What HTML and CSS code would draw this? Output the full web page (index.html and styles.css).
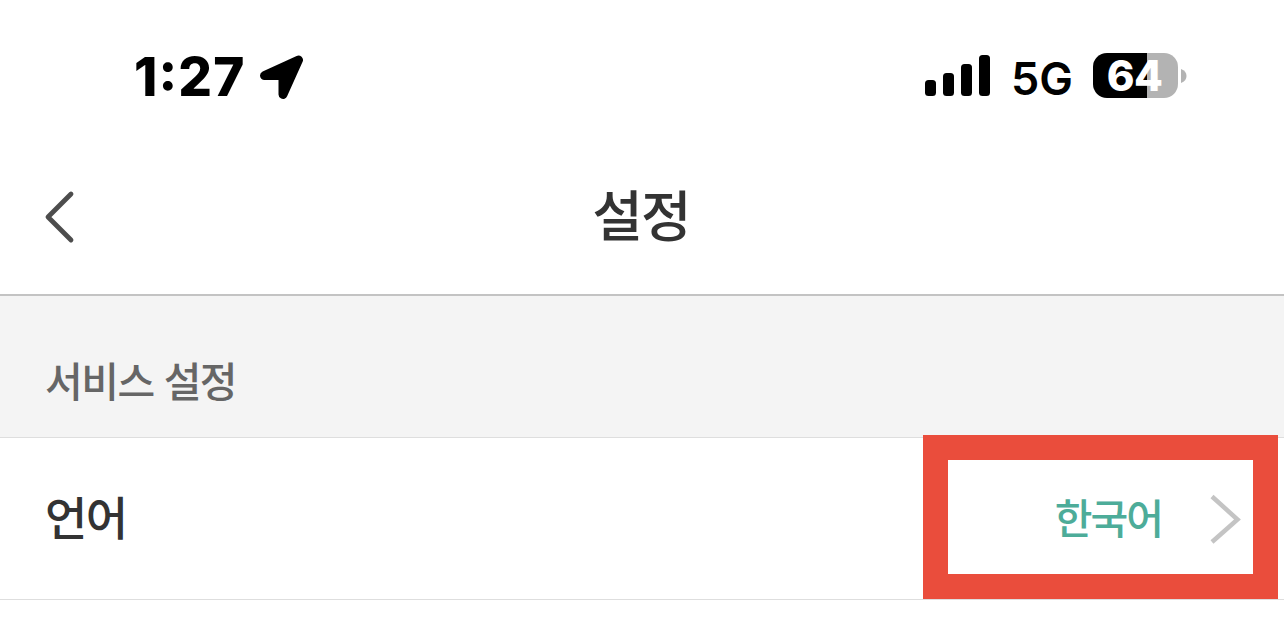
FILE: index.html
```html
<!DOCTYPE html>
<html lang="ko">
<head>
    <meta charset="UTF-8">
    <meta name="viewport" content="width=device-width, initial-scale=1.0">
    <title>설정</title>
    <link rel="stylesheet" href="styles.css">
</head>
<body>

  <div class="status">
    <div class="status-left">
      <span class="time">1:27</span>
      <svg class="location" width="46" height="46" viewBox="0 0 46 46">
        <path d="M5.500 20.500L39.500 5L24 39.500V20.500Z" stroke="#000" stroke-width="9" stroke-linejoin="round"/>
      </svg>
    </div>
    <div class="status-right">
      <svg class="signal" width="66" height="42" viewBox="0 0 66 42">
        <rect x="0" y="25" width="11" height="16" rx="3.500"/>
        <rect x="18" y="18" width="11" height="23" rx="3.500"/>
        <rect x="36" y="9" width="11" height="32" rx="3.500"/>
        <rect x="54" y="0" width="11" height="41" rx="3.500"/>
      </svg>
      <span class="network">5G</span>
      <div class="battery">64</div>
      <svg class="battery-tip" width="6" height="14" viewBox="0 0 6 14">
        <path d="M0 0Q5.500 2 5.500 7T0 14Z" fill="#b3b3b3"/>
      </svg>
    </div>
  </div>

  <header class="header">
    <svg class="back" width="32" height="54" viewBox="0 0 32 54">
      <path d="M28 4L5 27L28 50" fill="none" stroke="#4d4d4d" stroke-width="4.800" stroke-linecap="round" stroke-linejoin="round"/>
    </svg>
    <h1 class="title">설정</h1>
  </header>

  <h2 class="section">서비스 설정</h2>

  <div class="row">
    <span class="label">언어</span>
    <div class="select">
      <span class="value">한국어</span>
      <svg class="arrow" width="32" height="50" viewBox="0 0 32 50">
        <path d="M3 2.500L28.500 25.500L3 48" fill="none" stroke="#c4c4c4" stroke-width="4.500"/>
      </svg>
    </div>
  </div>

</body>
</html>
```
FILE: styles.css
```css
* {
  box-sizing: border-box;
}

body {
  margin: 0;
  height: 617px;
  overflow: hidden;
  background: #fff;
  color: #333;
  font-family: "Noto Sans CJK KR", sans-serif;
  font-weight: 500;
}

svg {
  display: block;
  flex: none;
}

.status {
  display: flex;
  justify-content: space-between;
  height: 140px;
  padding: 53px 97px 0 134px;
  color: #000;
  font-family: Inter, sans-serif;
}

.status-left,
.status-right {
  display: flex;
  align-items: flex-start;
}

.time {
  width: 112px;
  font-size: 53px;
  font-weight: 800;
  font-feature-settings: "case";
  letter-spacing: 1.1px;
  line-height: 49px;
  white-space: nowrap;
}

.location {
  margin: 2px 0 0 13px;
}

.signal {
  margin-top: 2px;
}

.network {
  margin-left: 20px;
  font-size: 45px;
  font-weight: 600;
  line-height: 51px;
}

.battery {
  width: 85px;
  height: 45px;
  margin-left: 20px;
  padding-right: 2px;
  border-radius: 14px;
  background: linear-gradient(to right, #000 54px, #b3b3b3 54px);
  color: #fff;
  font-size: 42px;
  font-weight: 800;
  letter-spacing: -0.5px;
  line-height: 46px;
  text-align: center;
}

.battery-tip {
  margin: 16px 0 0 3px;
}

.header {
  display: grid;
  grid-template-columns: 1fr auto 1fr;
  align-items: center;
  height: 156px;
  padding: 0 43px;
  border-bottom: 2px solid #c3c3c3;
}

.title {
  margin: 0 0 0 -2px;
  padding-bottom: 10px;
  font-size: 55px;
  font-weight: 500;
  letter-spacing: -1.8px;
  line-height: 60px;
}

.section {
  height: 142px;
  margin: 0;
  padding: 53px 45px 0;
  border-bottom: 1px solid #dedede;
  background: #f4f4f4;
  color: #666;
  font-size: 41px;
  font-weight: 500;
  letter-spacing: -1.5px;
  line-height: 60px;
}

.row {
  display: flex;
  justify-content: space-between;
  height: 162px;
  padding: 0 6px 0 45px;
  border-bottom: 1px solid #dedede;
}

.label {
  font-size: 46px;
  letter-spacing: -1.5px;
  line-height: 154px;
}

.select {
  display: flex;
  align-items: center;
  justify-content: flex-end;
  width: 355px;
  height: 164px;
  margin-top: -3px;
  padding-right: 12px;
  border: 25px solid #ea4d3c;
  background: #fff;
}

.value {
  padding-bottom: 2px;
  color: #4dac99;
  font-size: 41px;
  letter-spacing: -2px;
  line-height: 60px;
}

.arrow {
  margin: 4px 0 0 47px;
}
```
